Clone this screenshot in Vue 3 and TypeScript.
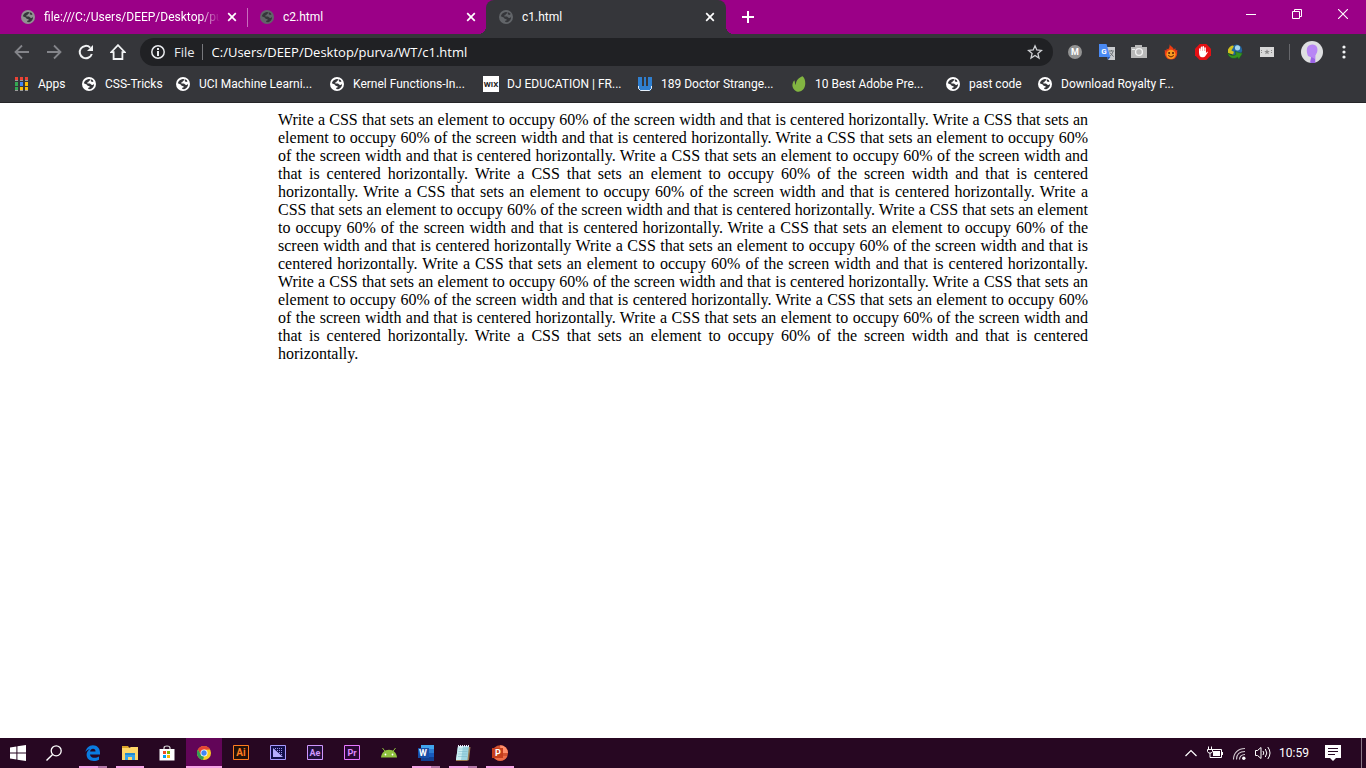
<script setup lang="ts">
interface Glyph {
  text: string
  x: number
  y: number
  size: number
  color: string
}
interface Tab {
  title: string
  active: boolean
  tone: string
}
interface Bookmark {
  label: string
  icon: string
}
interface TaskItem {
  name: string
  icon: string
  state: '' | 'open' | 'stacked' | 'current'
}

const tabs: Tab[] = [
  { title: 'file:///C:/Users/DEEP/Desktop/purva', active: false, tone: 'light' },
  { title: 'c2.html', active: false, tone: 'dim' },
  { title: 'c1.html', active: true, tone: 'dim' },
]

const bookmarks: Bookmark[] = [
  { label: 'Apps', icon: 'apps' },
  { label: 'CSS-Tricks', icon: 'globe' },
  { label: 'UCI Machine Learni...', icon: 'globe' },
  { label: 'Kernel Functions-In...', icon: 'globe' },
  { label: 'DJ EDUCATION | FR...', icon: 'wix' },
  { label: '189 Doctor Strange...', icon: 'wave' },
  { label: '10 Best Adobe Pre...', icon: 'leaf' },
  { label: 'past code', icon: 'globe' },
  { label: 'Download Royalty F...', icon: 'globe' },
]

const extensions: string[] = ['mega', 'translate', 'camera', 'flame', 'block', 'idm', 'ticket']

const taskItems: TaskItem[] = [
  { name: 'Edge', icon: 'edge', state: 'stacked' },
  { name: 'File Explorer', icon: 'folder', state: 'open' },
  { name: 'Store', icon: 'store', state: '' },
  { name: 'Chrome', icon: 'chrome', state: 'current' },
  { name: 'Illustrator', icon: 'ai', state: '' },
  { name: 'Media Encoder', icon: 'me', state: '' },
  { name: 'After Effects', icon: 'ae', state: '' },
  { name: 'Premiere Pro', icon: 'pr', state: '' },
  { name: 'Android', icon: 'android', state: '' },
  { name: 'Word', icon: 'word', state: 'stacked' },
  { name: 'Notepad', icon: 'notepad', state: 'stacked' },
  { name: 'PowerPoint', icon: 'ppt', state: 'open' },
]

const trayItems: string[] = ['chevron', 'battery', 'wifi', 'volume']

// Lettering that sits on top of an icon's shape
const glyphs: Record<string, Glyph> = {
  wix: { text: 'WIX', x: 8, y: 11, size: 8, color: '#222' },
  mega: { text: 'M', x: 8, y: 11, size: 9, color: '#fff' },
  translate: { text: 'G', x: 5, y: 10, size: 8, color: '#fff' },
  ai: { text: 'Ai', x: 8, y: 11, size: 10, color: '#ff7c20' },
  ae: { text: 'Ae', x: 8, y: 11, size: 9, color: '#cf96fd' },
  pr: { text: 'Pr', x: 8, y: 11, size: 9, color: '#e08aff' },
  word: { text: 'W', x: 5, y: 11, size: 9, color: '#fff' },
  ppt: { text: 'P', x: 6, y: 11, size: 9, color: '#fff' },
}

const sentence =
  'Write a CSS that sets an element to occupy 60% of the screen width and that is centered horizontally'
const text = [
  Array(9).fill(sentence).join('. '),
  Array(7).fill(sentence).join('. ') + '.',
].join(' ')
</script>

<template>
  <svg class="defs" aria-hidden="true">
    <symbol id="globe" viewBox="0 0 14 14">
      <circle cx="7" cy="7" r="7" fill="currentColor" />
      <path class="land" d="M1.8 6.2C2.6 3.6 4.4 2.2 6.8 1.9L8.6 2.2 8 3.4 6.6 3.9 6.8 5 5.2 5.5 5.4 6.4 8 6.5 9.4 7.8 11 8 12.1 6.8C12.2 9.6 10.6 11.6 8.2 12.2L6.2 12.1 6.3 10.8 7.8 10.3 7.5 9.2 5.6 8.7 4.7 7.4Z" />
      <path class="land" d="M9.3 2.3L10.8 3.2 11.5 4.5 10 4.9 8.7 4.1Z" />
    </symbol>
    <symbol id="apps" viewBox="0 0 14 14">
      <path d="M0 0h3v4H0zM5 0h3v4H5zM10 0h3v4h-3z" fill="#ea4335" />
      <path d="M0 5h3v4H0zM0 10h3v4H0z" fill="#34a853" /><path d="M5 5h3v4H5z" fill="#4285f4" />
      <path d="M10 5h3v4h-3zM5 10h3v4H5zM10 10h3v4h-3z" fill="#fbbc05" />
      <path d="M0 3.5h3M5 3.5h3M10 3.5h3M0 13.5h3M5 13.5h3M10 13.5h3" stroke="#9b9b9b" />
    </symbol>
    <symbol id="wix" viewBox="0 0 16 16"><path d="M0 0h16v16H0z" fill="#fff" /></symbol>
    <symbol id="wave" viewBox="0 0 16 16">
      <path d="M1 1h4v9h2V1h2v9h2V1h4v11l-2 3H4l-3-3Z" fill="#2f7fd0" />
      <path d="M1.5 10v2.5l2 2h9l2-2V10" fill="none" stroke="#e6f0fb" />
      <path d="M6 1.5v3M10 1.5v3" stroke="#35363a" />
    </symbol>
    <symbol id="leaf" viewBox="0 0 16 16">
      <path d="M11.6.3C13.8 2 14.8 6 14 9.8 13 14.4 9.3 16.4 5.6 15.4 2 14 .6 10.2 1.8 7 2.3 5.2 3.1 4.3 3.6 4.5 3.8 6.6 4.3 8 5 9 4.6 4.8 7.8 1.6 11.6.3Z" fill="#82b541" />
    </symbol>

    <symbol id="back" viewBox="0 0 16 16">
      <path d="M15 8H2M8 1.5L1.5 8 8 14.5" fill="none" stroke="#84858a" stroke-width="1.8" />
    </symbol>
    <symbol id="forward" viewBox="0 0 16 16">
      <path d="M1 8h13M8 1.5L14.5 8 8 14.5" fill="none" stroke="#84858a" stroke-width="1.8" />
    </symbol>
    <symbol id="reload" viewBox="0 0 16 16">
      <path d="M13.8 10A6.2 6.2 0 1 1 12.2 3.6" fill="none" stroke="#f1f3f4" stroke-width="2" />
      <path d="M15 1v6H9Z" fill="#f1f3f4" />
    </symbol>
    <symbol id="home" viewBox="0 0 16 16">
      <path d="M8 1.2L1.2 8.2H3.6V15H12.4V8.2H14.8Z" fill="none" stroke="#f1f3f4" stroke-width="1.8" />
    </symbol>
    <symbol id="info" viewBox="0 0 14 14">
      <circle cx="7" cy="7" r="6.2" fill="none" stroke="#e8eaed" stroke-width="1.5" />
      <path d="M6 3h2v2H6zM6 6h2v5H6z" fill="#e8eaed" />
    </symbol>
    <symbol id="star" viewBox="0 0 16 16">
      <path d="M8 1.8L9.8 6 14.4 6.4 10.9 9.4 12 14 8 11.5 4 14 5.1 9.4 1.6 6.4 6.2 6Z" fill="none" stroke="#d0d2d5" stroke-width="1.3" />
    </symbol>
    <symbol id="more" viewBox="0 0 16 16">
      <circle cx="8" cy="3" r="1.6" fill="#f1f3f4" /><circle cx="8" cy="8" r="1.6" fill="#f1f3f4" /><circle cx="8" cy="13" r="1.6" fill="#f1f3f4" />
    </symbol>
    <symbol id="close" viewBox="0 0 10 10">
      <path d="M1.2 1.2l7.6 7.6M8.8 1.2L1.2 8.8" stroke="#fff" stroke-width="1.7" />
    </symbol>
    <symbol id="plus" viewBox="0 0 12 12"><path d="M6 0v12M0 6h12" stroke="#fff" stroke-width="2" /></symbol>
    <symbol id="minimize" viewBox="0 0 10 10"><path d="M0 5.5h10" stroke="#fff" /></symbol>
    <symbol id="restore" viewBox="0 0 10 10">
      <path d="M.5 2.5h7v7h-7zM2.5 2.5v-2h7v7h-2" fill="none" stroke="#fff" />
    </symbol>
    <symbol id="quit" viewBox="0 0 10 10"><path d="M0 0l10 10M10 0L0 10" stroke="#fff" stroke-width="1.1" /></symbol>

    <symbol id="mega" viewBox="0 0 16 16"><circle cx="8" cy="8" r="7" fill="#939393" /></symbol>
    <symbol id="translate" viewBox="0 0 16 16">
      <path d="M6 3h10v13H9z" fill="#c9cbce" />
      <path d="M10 7h5M12.5 6v1M14 7.5C13.2 10 12 11.5 10.5 12.5M11 8.6l3.6 4" stroke="#6b7075" fill="none" />
      <path d="M0 0h7.5l3.8 13H0Z" fill="#4a8af4" /><path d="M8 13h3.3L9 16Z" fill="#2456b3" />
    </symbol>
    <symbol id="camera" viewBox="0 0 16 16">
      <path d="M0 3h4V1h7v2h5v11H0z" fill="#b9b9b9" />
      <circle cx="8" cy="8" r="3.4" fill="none" stroke="#f2f2f2" stroke-width="1.4" /><path d="M1 5.5h3" stroke="#eee" />
    </symbol>
    <symbol id="flame" viewBox="0 0 16 16">
      <path d="M6.5 0C7 2.2 10.5 3 10.8 5.8L12.3 4 12.6 6.4 14.4 6C13.6 7.5 14.8 9 13.8 11.5 12.8 14.4 10.6 15.6 8 15.6S3.2 14.4 2.2 11.5C1.4 9.2 2.2 7.8 1.6 6L3.4 6.6 3.8 4.6 5 5.6C6.6 4 6.8 2 6.5 0Z" fill="#ef3d13" />
      <circle cx="8" cy="10.4" r="4.6" fill="#f99a20" />
      <circle cx="6.1" cy="9" r="1" fill="#4a1a09" /><circle cx="10" cy="9" r="1" fill="#4a1a09" />
      <path d="M5.2 11.5q2.8 3 5.6 0" fill="none" stroke="#641c08" />
    </symbol>
    <symbol id="block" viewBox="0 0 16 16">
      <path d="M4.7 0h6.6L16 4.7v6.6L11.3 16H4.7L0 11.3V4.7Z" fill="#e41014" />
      <path d="M4.8 8.2V5M6.5 8V3.3M8.3 8V2.8M10.1 8V4" stroke="#fff" stroke-width="1.5" stroke-linecap="round" />
      <path d="M4 7h6.9v2l1.7-1.4c.4.5.1 1-.2 1.5l-2.2 3.2c-1 1.4-4.3 1.4-5.2 0C4.2 11.3 4 9 4 7Z" fill="#fff" />
    </symbol>
    <symbol id="idm" viewBox="0 0 16 16">
      <circle cx="9.5" cy="6.2" r="5.6" fill="#2467a0" /><circle cx="10.5" cy="3.8" r="2.6" fill="#a5d6ec" />
      <path d="M1 5.5C3 1.5 6.5.8 6.8 2.4L4.4 6.4 7 7.8 6 10.4 1 9Z" fill="#d2c21f" />
      <path d="M.6 8.5C3 11.6 6.4 12 9 10.4L8 7.4 15.6 9.4 11.6 15.4 10.8 13.2C6 15.8 1.4 14 .6 8.5Z" fill="#36941f" stroke="#145324" stroke-width=".5" />
    </symbol>
    <symbol id="ticket" viewBox="0 0 16 16">
      <path d="M1 3h14v10H1z" fill="#d8d8d8" />
      <path d="M8 5.2l.8 1.9h2L9.2 8.3l.6 2L8 9.2l-1.8 1.1.6-2L5.2 7.1h2Z" fill="#8a8a8a" />
      <path d="M2.5 6v1M2.5 8v1M12.5 6v1M12.5 8v1" stroke="#888" />
    </symbol>
    <symbol id="avatar" viewBox="0 0 22 22">
      <circle cx="11" cy="11" r="11" fill="#dedfe1" />
      <path d="M7 15C5 10 5 4 11 3.6c4.8-.3 6.4 4 5 8l-1.6 3v6.6H9l1-5Z" fill="#b886f5" />
      <path d="M10.3 16l-.9 6h4.6v-4Z" fill="#9b64e4" />
    </symbol>

    <symbol id="windows" viewBox="0 0 16 16">
      <path d="M0 2.4L6.4 1.4V7.4H0ZM7.4 1.2L16 0V7.4H7.4ZM0 8.4H6.4V14.6L0 13.6ZM7.4 8.4H16V16L7.4 14.8Z" fill="#fff" />
    </symbol>
    <symbol id="search" viewBox="0 0 16 16">
      <circle cx="10.2" cy="5.8" r="5" fill="none" stroke="#fff" stroke-width="1.3" /><path d="M6.6 9.4L.5 15.5" stroke="#fff" stroke-width="1.4" />
    </symbol>
    <symbol id="edge" viewBox="0 0 16 16">
      <path d="M.4 7C1.1 3.2 3.9.2 7.9.2c4.5 0 7.1 3.2 7.1 7.6v1.6H5c.2 2.4 2.2 3.4 4.5 3.4 1.7 0 3.2-.5 4.5-1.3v3.2c-1.4.8-3.2 1.3-5.3 1.3C4.4 16 1.6 13.6 1.6 9.8c0-2.4 1.2-4.4 3.3-5.5C2.8 4.5 1.3 5.6.4 7Zm4.7-.5h5.4c0-1.8-.9-2.7-2.5-2.7S5.4 4.8 5.1 6.5Z" fill="#0a7be0" />
    </symbol>
    <symbol id="folder" viewBox="0 0 16 16">
      <path d="M0 1h6l1.5 2H0Z" fill="#dba32a" /><path d="M0 3h7l2-1h7v13H0z" fill="#ffd768" />
      <path d="M3 8h10v7h-3v-3H6v3H3z" fill="#38a4e8" /><path d="M3 8h10v2H3z" fill="#258bcf" />
    </symbol>
    <symbol id="store" viewBox="0 0 16 16">
      <path d="M5 5V3q0-2 3-2t3 2v2" fill="none" stroke="#ddd" stroke-width="1.2" />
      <path d="M.5 4h15v11.5H.5z" fill="#fff" />
      <path d="M4 6h3v3H4z" fill="#f25022" /><path d="M8 6h3v3H8z" fill="#7fba00" />
      <path d="M4 10h3v3H4z" fill="#00a4ef" /><path d="M8 10h3v3H8z" fill="#ffb900" />
    </symbol>
    <symbol id="chrome" viewBox="0 0 16 16">
      <circle cx="8" cy="8" r="7" fill="#f9cc24" />
      <path d="M1.9 4.5A7 7 0 0 1 14.1 4.6L8 4.7 4.8 9.7Z" fill="#e54335" />
      <path d="M1.9 4.5L5 9.8l3 1.7-1 3.4A7 7 0 0 1 1.9 4.5Z" fill="#329d55" />
      <circle cx="8" cy="8" r="3.5" fill="#fff" /><circle cx="8" cy="8" r="2.7" fill="#4285f4" />
    </symbol>
    <symbol id="ai" viewBox="0 0 16 16"><path d="M.5.5h15v14H.5z" fill="#241108" stroke="#ff7c20" /></symbol>
    <symbol id="me" viewBox="0 0 16 16">
      <path d="M.5.5h15v14H.5z" fill="#13104b" stroke="#a89bff" />
      <path d="M3 3v9h10Z" fill="#b6adff" /><path d="M5 3.5h8M7 5.5h6M9 7.5h4M11 9.5h2" stroke="#9c90ec" stroke-dasharray="1 1" />
    </symbol>
    <symbol id="ae" viewBox="0 0 16 16"><path d="M.5.5h15v14H.5z" fill="#23103b" stroke="#cf96fd" /></symbol>
    <symbol id="pr" viewBox="0 0 16 16"><path d="M.5.5h15v14H.5z" fill="#2b0835" stroke="#e878ff" /></symbol>
    <symbol id="android" viewBox="0 0 16 16">
      <path d="M0 12.5C.3 8 3.5 4.7 8 4.7s7.7 3.3 8 7.8Z" fill="#8fc13e" />
      <path d="M1.5 3l3 4M14.5 3l-3 4" stroke="#8fc13e" /><circle cx="4.5" cy="9.5" r=".9" fill="#fff" /><circle cx="11.5" cy="9.5" r=".9" fill="#fff" />
    </symbol>
    <symbol id="word" viewBox="0 0 16 16">
      <path d="M3 0h13v5H3z" fill="#41a5ee" /><path d="M3 4h13v4H3z" fill="#2b7cd3" /><path d="M3 8h13v4H3z" fill="#185abd" /><path d="M3 12h13v4H3z" fill="#103f91" />
      <path d="M0 3h11v10H0z" fill="#174ea6" />
    </symbol>
    <symbol id="notepad" viewBox="0 0 16 16">
      <path d="M13 2h2.5L14 15 12 16H1V13Z" fill="#987a50" />
      <path d="M3 1h11l-1.5 14H1Z" fill="#9dd4e0" /><path d="M3 1h5L6 15H1Z" fill="#cceef2" />
      <path d="M3 1h11" stroke="#eef" stroke-width="2" stroke-dasharray="1 1" />
      <path d="M4 4h9M3.5 6.5h9M3.2 9h9M3 11.5h9" stroke="#75b4c8" stroke-width=".5" />
    </symbol>
    <symbol id="ppt" viewBox="0 0 16 16">
      <circle cx="8.2" cy="8" r="7.8" fill="#d35230" /><path d="M8.2.2A7.8 7.8 0 0 1 16 8H8.2Z" fill="#ff8f6b" /><path d="M1 11h14.4a7.8 7.8 0 0 1-14.4 0Z" fill="#ed6c47" />
      <path d="M0 3h11v10H0z" fill="#c43e1c" />
    </symbol>
    <symbol id="chevron" viewBox="0 0 16 16"><path d="M2.5 11L8 5.5 13.5 11" fill="none" stroke="#fff" stroke-width="1.2" /></symbol>
    <symbol id="battery" viewBox="0 0 16 16">
      <path d="M5 4.5h9.5v8H4M15.5 7v3" fill="none" stroke="#fff" /><path d="M6 6h7v5H6z" fill="#fff" />
      <path d="M1.5 1.5V4M4.5 1.5V4" stroke="#fff" /><path d="M.5 4.5h5v2L4.3 8H1.7L.5 6.5ZM3 8v4.5h2" fill="none" stroke="#fff" />
    </symbol>
    <symbol id="wifi" viewBox="0 0 16 16">
      <g fill="none" stroke="#d5cdd3" stroke-width="1.1">
        <path d="M2.5 14.5C2.5 8 7 3.5 14 3.5" /><path d="M5.5 14.5C5.5 9.5 8.5 6.5 14 6.5" /><path d="M8.5 14.5c0-3 2-5 5.5-5" />
      </g>
      <circle cx="12.8" cy="13.3" r="1.7" fill="#fff" />
    </symbol>
    <symbol id="volume" viewBox="0 0 16 16">
      <path d="M.5 5.5h2L6 2.5v11L2.5 10.5h-2Z" fill="none" stroke="#fff" />
      <path d="M8 6q1.6 2 0 4M10.3 4q3 4 0 8M12.8 2q4.4 6 0 12" fill="none" stroke="#fff" />
    </symbol>
    <symbol id="note" viewBox="0 0 16 16">
      <path d="M0 0h16v13h-5l-3 3-3-3H0Z" fill="#fff" /><path d="M3 3.5h10M3 6.5h10M3 9.5h7" stroke="#270722" />
    </symbol>
  </svg>

  <div class="screen">
    <header class="browser">
      <div class="tab-strip">
        <div v-for="tab in tabs" :key="tab.title" class="tab" :class="{ active: tab.active }">
          <button class="tab-main" type="button">
            <svg class="i14" :class="tab.tone"><use href="#globe" /></svg>
            <span class="tab-title">{{ tab.title }}</span>
          </button>
          <button class="tab-close" type="button" aria-label="Close tab"><svg class="i10"><use href="#close" /></svg></button>
        </div>
        <button class="new-tab" type="button" aria-label="New tab"><svg class="i12"><use href="#plus" /></svg></button>
        <div class="window-controls">
          <button type="button" aria-label="Minimize"><svg class="i10"><use href="#minimize" /></svg></button>
          <button type="button" aria-label="Restore"><svg class="i10"><use href="#restore" /></svg></button>
          <button type="button" aria-label="Close"><svg class="i10"><use href="#quit" /></svg></button>
        </div>
      </div>

      <nav class="toolbar" aria-label="Navigation">
        <button v-for="n in ['back', 'forward', 'reload', 'home']" :key="n" class="tool" type="button" :aria-label="n">
          <svg class="i16"><use :href="'#' + n" /></svg>
        </button>
        <div class="omnibox">
          <svg class="i14"><use href="#info" /></svg>
          <label class="scheme" for="address">File</label>
          <input id="address" class="address" type="text" value="C:/Users/DEEP/Desktop/purva/WT/c1.html" />
          <button class="favorite" type="button" aria-label="Bookmark"><svg class="i16"><use href="#star" /></svg></button>
        </div>
        <div class="extensions">
          <button v-for="e in extensions" :key="e" class="tool" type="button" :aria-label="e">
            <svg class="i16">
              <use :href="'#' + e" />
              <text v-if="glyphs[e]" :x="glyphs[e].x" :y="glyphs[e].y" :font-size="glyphs[e].size" :fill="glyphs[e].color">{{ glyphs[e].text }}</text>
            </svg>
          </button>
        </div>
        <button class="profile" type="button" aria-label="Profile"><svg class="i22"><use href="#avatar" /></svg></button>
        <button class="tool" type="button" aria-label="Menu"><svg class="i16"><use href="#more" /></svg></button>
      </nav>

      <nav class="bookmarks" aria-label="Bookmarks">
        <a v-for="b in bookmarks" :key="b.label" href="#" :class="{ large: b.icon !== 'globe' && b.icon !== 'apps' }">
          <svg :class="b.icon === 'globe' || b.icon === 'apps' ? 'i14' : 'i16'">
            <use :href="'#' + b.icon" />
            <text v-if="glyphs[b.icon]" :x="glyphs[b.icon].x" :y="glyphs[b.icon].y" :font-size="glyphs[b.icon].size" :fill="glyphs[b.icon].color">{{ glyphs[b.icon].text }}</text>
          </svg>
          <span>{{ b.label }}</span>
        </a>
      </nav>
    </header>

    <main class="page">
      <p>{{ text }}</p>
    </main>

    <footer class="taskbar">
      <button class="task" type="button" aria-label="Start"><svg class="i16"><use href="#windows" /></svg></button>
      <button class="task" type="button" aria-label="Search"><svg class="i16"><use href="#search" /></svg></button>
      <div class="task-list">
        <button v-for="t in taskItems" :key="t.name" class="task" :class="t.state" type="button" :aria-label="t.name">
          <svg class="i16">
            <use :href="'#' + t.icon" />
            <text v-if="glyphs[t.icon]" :x="glyphs[t.icon].x" :y="glyphs[t.icon].y" :font-size="glyphs[t.icon].size" :fill="glyphs[t.icon].color">{{ glyphs[t.icon].text }}</text>
          </svg>
        </button>
      </div>
      <div class="tray">
        <button v-for="t in trayItems" :key="t" type="button" :aria-label="t"><svg class="i16"><use :href="'#' + t" /></svg></button>
        <time>10:59</time>
        <button class="notes" type="button" aria-label="Notifications"><svg class="i16"><use href="#note" /></svg></button>
      </div>
    </footer>
  </div>
</template>

<style>
body {
  margin: 0;
}
</style>

<style scoped>
* {
  box-sizing: border-box;
}
button {
  display: flex;
  align-items: center;
  justify-content: center;
  padding: 0;
  border: 0;
  background: none;
  color: inherit;
  font: inherit;
}
svg {
  display: block;
  flex: none;
}
svg text {
  font-family: Roboto, sans-serif;
  font-weight: 700;
  text-anchor: middle;
}
.defs {
  position: absolute;
  width: 0;
  height: 0;
}
.i10 { width: 10px; height: 10px; }
.i12 { width: 12px; height: 12px; }
.i14 { width: 14px; height: 14px; }
.i16 { width: 16px; height: 16px; }
.i22 { width: 22px; height: 22px; }
.land {
  fill: #35363a;
}
.screen {
  display: flex;
  flex-direction: column;
  min-height: 100vh;
  background: #fff;
}
.browser {
  background: #35363a;
  border-bottom: 1px solid #252528;
  color: #fff;
  font: 12px/16px Roboto, "Noto Sans", sans-serif;
}
.tab-strip {
  display: flex;
  height: 34px;
  padding-left: 8px;
  background: #9b0087;
}
.tab {
  position: relative;
  display: flex;
  align-items: center;
  width: 239px;
  padding: 0 7px 0 13px;
}
.tab:first-child::after {
  content: "";
  position: absolute;
  top: 8px;
  left: 100%;
  width: 1px;
  height: 19px;
  background: #c96dbe;
}
.tab-main {
  flex: 1;
  min-width: 0;
  gap: 9px;
  justify-content: flex-start;
}
.tab-title {
  overflow: hidden;
  white-space: nowrap;
}
.tab:first-child .tab-title {
  mask-image: linear-gradient(90deg, #000 calc(100% - 20px), transparent);
}
.tab-close {
  width: 16px;
  height: 16px;
  margin-left: 4px;
}
.light { color: #929292; }
.dim { color: #626569; }
.tab.active {
  width: 240px;
  padding-right: 8px;
  border-radius: 8px 8px 0 0;
  background: #35363a;
}
.tab.active::before,
.tab.active::after {
  content: "";
  position: absolute;
  bottom: 0;
  width: 8px;
  height: 8px;
}
.tab.active::before {
  right: 100%;
  background: radial-gradient(circle at 0 0, transparent 8px, #35363a 8px);
}
.tab.active::after {
  left: 100%;
  background: radial-gradient(circle at 100% 0, transparent 8px, #35363a 8px);
}
.new-tab {
  width: 28px;
  margin-left: 8px;
}
.window-controls {
  display: flex;
  height: 28px;
  margin-left: auto;
}
.window-controls button {
  width: 46px;
}
.toolbar {
  display: flex;
  align-items: center;
  height: 36px;
  padding: 0 6px;
}
.tool {
  width: 32px;
  height: 28px;
}
.omnibox {
  display: flex;
  flex: 1;
  align-items: center;
  height: 28px;
  margin: 0 6px;
  padding: 0 10px 0 11px;
  border-radius: 14px;
  background: #202124;
  font-family: "Open Sans", "Noto Sans", sans-serif;
  font-size: 13px;
}
.scheme {
  margin-left: 9px;
  padding-right: 7px;
  border-right: 1px solid #77787c;
  color: #e8eaed;
}
.address {
  flex: 1;
  min-width: 0;
  height: 24px;
  padding: 0 9px;
  border: 0;
  background: none;
  color: #fff;
  font: inherit;
}
.extensions {
  display: flex;
}
.profile {
  width: 39px;
  height: 16px;
  padding-left: 6px;
  margin-left: 6px;
  border-left: 1px solid #66676b;
}
.bookmarks {
  display: grid;
  grid-template-columns: 67px 94px 154px 153px 154px 154px 155px 92px 1fr;
  padding: 4px 15px 8px;
  align-items: center;
}
.bookmarks a {
  display: flex;
  align-items: center;
  gap: 9px;
  height: 20px;
  color: #fff;
  text-decoration: none;
  white-space: nowrap;
}
.bookmarks a.large {
  gap: 8px;
}
.page {
  flex: 1;
  padding: 8px;
  color: #000;
  font: 16px/18px "Liberation Serif", serif;
}
.page p {
  width: 60%;
  margin: 0 auto;
  text-align: justify;
}
.taskbar {
  display: flex;
  height: 30px;
  background: #270722;
  color: #fff;
  font: 12px/16px Roboto, "Noto Sans", sans-serif;
}
.task {
  position: relative;
  width: 36px;
  height: 30px;
}
.task-list {
  display: flex;
  gap: 1px;
  margin-left: 3px;
}
.open::after,
.stacked::after,
.current::after {
  content: "";
  position: absolute;
  right: 4px;
  bottom: 0;
  left: 4px;
  height: 2px;
  background: #f5a3e6;
}
.stacked::after {
  background: linear-gradient(90deg, #f5a3e6 19px, #b377a8 19px);
}
.current {
  background: #620558;
}
.current::after {
  right: 0;
  left: 0;
}
.tray {
  display: flex;
  align-items: center;
  margin-left: auto;
  margin-right: 4px;
  border-right: 1px solid #8a7886;
}
.tray button {
  width: 24px;
  height: 30px;
}
.tray time {
  margin-left: 4px;
}
.tray .notes {
  width: 52px;
  padding-right: 0;
}
.tray .notes svg {
  margin-right: 4px;
}
</style>
